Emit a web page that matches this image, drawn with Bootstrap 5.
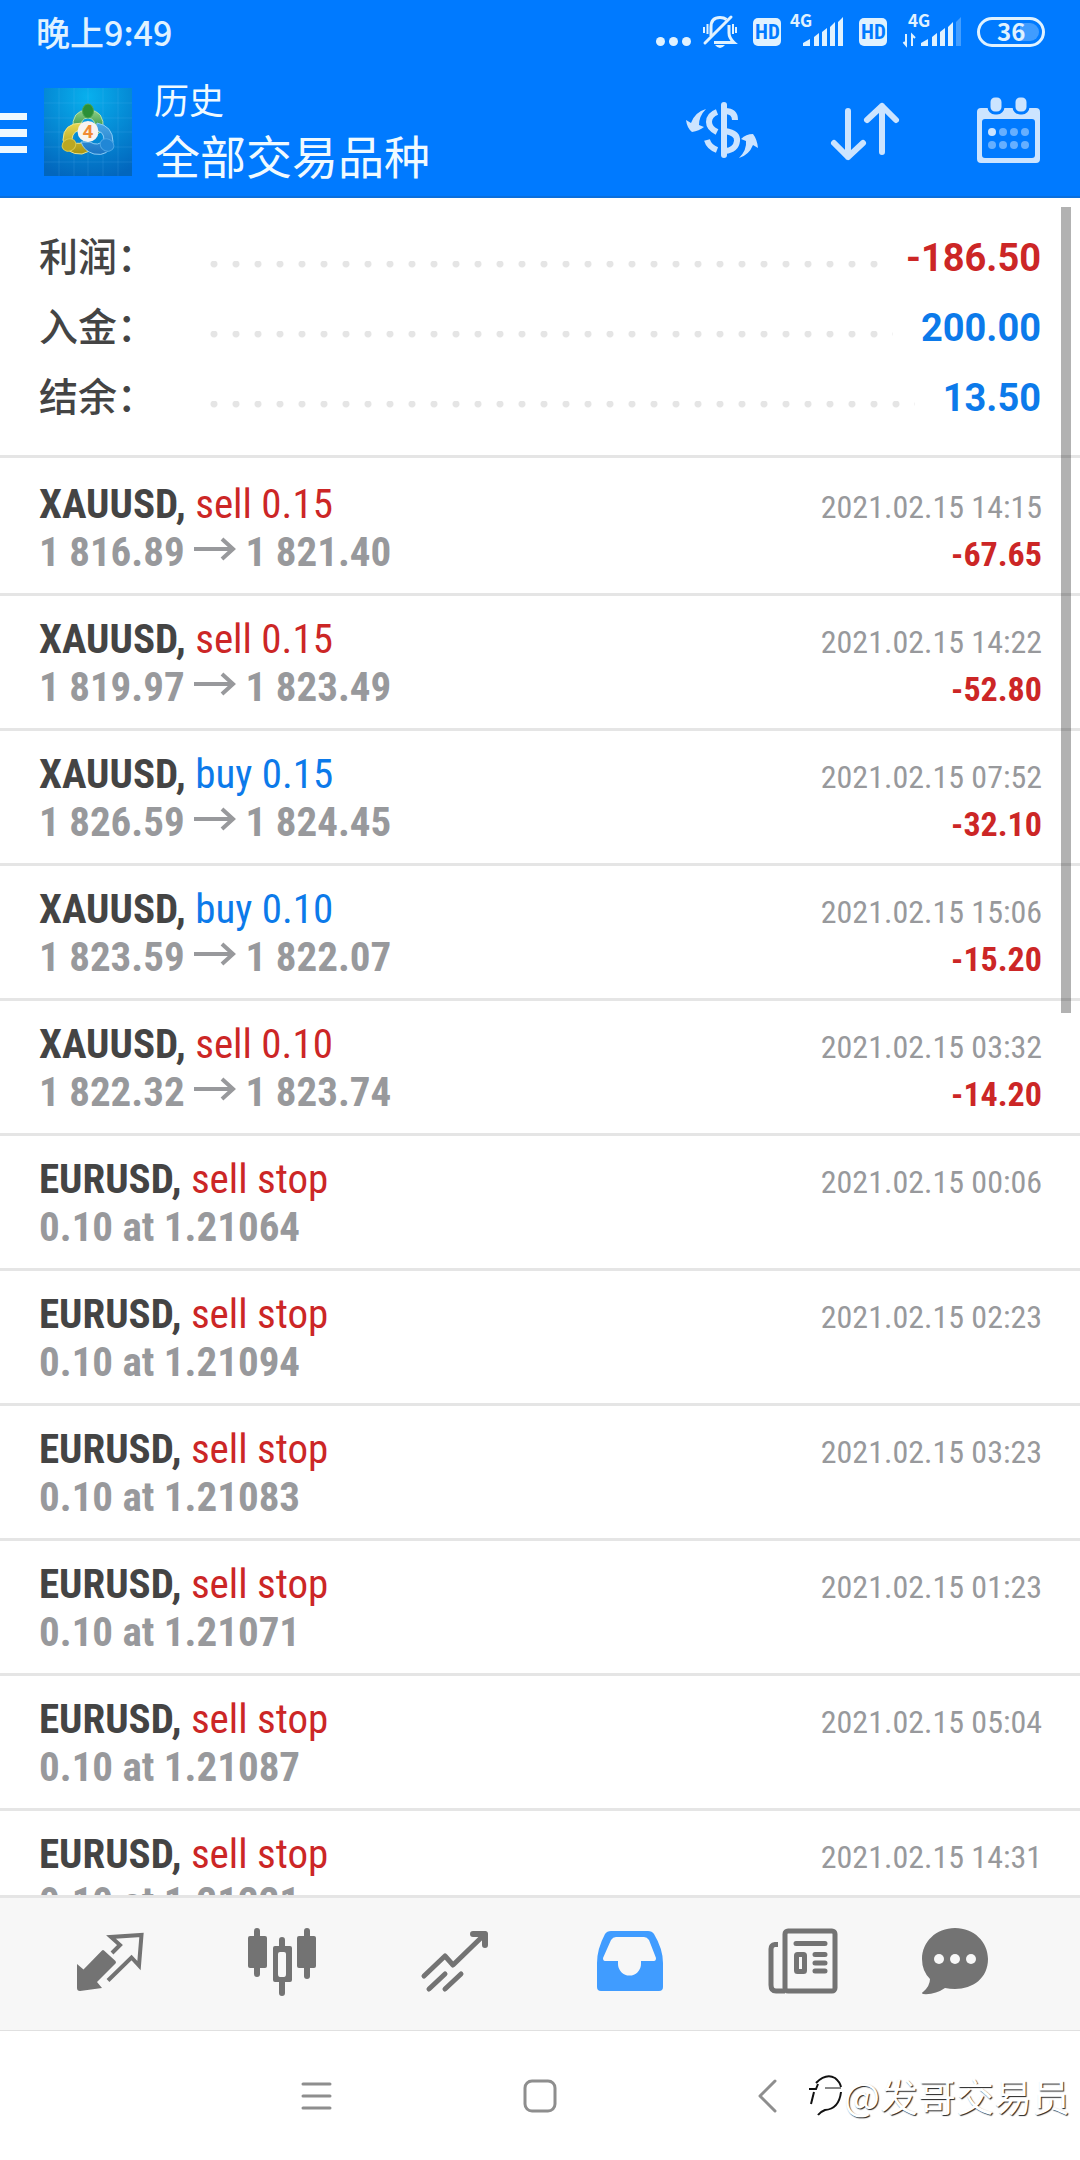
<!DOCTYPE html>
<html lang="zh-CN">
<head>
<meta charset="utf-8">
<meta name="viewport" content="width=device-width, initial-scale=1">
<title>历史 - 全部交易品种</title>
<link rel="stylesheet" href="https://cdn.jsdelivr.net/npm/bootstrap@5.3.0/dist/css/bootstrap.min.css">
<style>
  :root { --brand: #007aff; --line: #e5e5e5; --loss: #cc2626; --gain: #0c7aea; --ink: #444; --muted: #98999c; }
  body { font-family: Roboto, "Noto Sans CJK SC", sans-serif; color: var(--ink); background: #fff; }
  button { border: 0; background: none; padding: 0; line-height: 0; color: inherit; }
  svg { display: block; overflow: visible; }
  .app-head { background: var(--brand); border-bottom: 2px solid #0b6fdc; }
  .status-bar { height: 62px; padding: 4px 35px 0 36px; color: #e0f2ff; }
  .clock { font: 500 34px/56px "Noto Sans CJK SC", sans-serif; }
  .status-icons text { font-family: "Noto Sans CJK SC", sans-serif; font-weight: 700; }
  .status-icons .hd { font-family: "Roboto Condensed", Roboto, sans-serif; }
  .toolbar { height: 134px; padding: 6px 35px 0 0; }
  .app-logo { margin: 0 22px 0 16px; }
  .head-titles { padding-bottom: 5px; }
  .head-small { font: 400 35px/48px "Noto Sans CJK SC", sans-serif; color: #f0faff; }
  .head-large { font: 400 46px/62px "Noto Sans CJK SC", sans-serif; color: #f0faff; }
  .head-actions { gap: 71px; color: #cce4ff; }
  .totals { padding: 25px 39px 22px 39px; border-bottom: 3px solid var(--line); margin-bottom: 3px; }
  .total-line { height: 70px; }
  .total-name { font: 500 39px/62px "Noto Sans CJK SC", sans-serif; width: 171px; padding-bottom: 8px; }
  .total-value { font-size: 38px; font-weight: 700; line-height: 70px; }
  .dots { height: 7px; margin: 13px 28px 0 0; background: radial-gradient(circle at 4px 3px, #e5e5e5 3px, transparent 4px) 0 0 / 22px 7px repeat-x; }
  .loss { color: var(--loss); }
  .gain { color: var(--gain); }
  .deal { height: 135px; padding: 19px 38px 0 39px; border-bottom: 3px solid var(--line); font-family: "Roboto Condensed", Roboto, sans-serif; }
  .deal-line { height: 48px; font-size: 41px; line-height: 48px; white-space: pre; }
  .deal-line b { font-weight: 700; }
  .deal-line svg { vertical-align: baseline; }
  .deal-price { color: var(--muted); font-weight: 700; }
  .deal-time { color: var(--muted); font-size: 32px; line-height: 40px; }
  .deal-profit { font-size: 34px; line-height: 40px; font-weight: 700; }
  .scroll-thumb { position: absolute; top: 9px; right: 9px; width: 10px; height: 47.5%; background: rgba(0, 0, 0, .3); }
  .tab-bar { height: 136px; padding-left: 23px; background: #f7f7f7; border-top: 3px solid var(--line); border-bottom: 1px solid #e0e0e0; color: #737373; }
  .tab-bar button { width: 16.4%; }
  .tab-bar button:last-child { width: 12.2%; }
  .tab-bar .active { color: #409cff; }
  .system-bar { height: 129px; padding: 0 27.3% 0 27.7%; color: #8e8e8e; }
  .sign { position: absolute; right: 10px; bottom: 40px; color: #fff; font: 400 38px/50px "Noto Sans CJK SC", sans-serif; text-shadow: 1px 1px 1px #222; }
</style>
</head>
<body>
<svg width="0" height="0" class="position-absolute" aria-hidden="true">
  <symbol id="to" viewBox="0 0 42 34"><path d="M0 17H40M28 7L39 17L28 27" fill="none" stroke="currentColor" stroke-width="4"/></symbol>
</svg>
<div class="d-flex flex-column vh-100 overflow-hidden">
  <header class="app-head flex-shrink-0">
    <div class="status-bar d-flex justify-content-between align-items-start">
      <span class="clock">晚上9:49</span>
      <svg class="status-icons" width="386" height="48" viewBox="659 5 386 48" fill="currentColor" role="img" aria-label="信号与电量 36">
        <circle cx="660.500" cy="42.500" r="4.500"/><circle cx="673.500" cy="42.500" r="4.500"/><circle cx="686.500" cy="42.500" r="4.500"/>
        <g fill="none" stroke="currentColor" stroke-width="3">
          <path d="M711 37V28Q711 18.500 720 18.500Q724 18.500 726.500 20.500M729 26V34Q729 39 734 43.500H714"/>
          <path d="M705 44L731 18" stroke-linecap="round"/><path d="M704 28V34M707.500 25V35M733 25V35M736 28V34" stroke-width="2"/>
        </g>
        <path d="M715 46H725Q720 52 715 46Z"/>
        <rect x="753" y="19" width="28" height="28" rx="5"/><text class="hd" x="755" y="40" font-size="21" fill="#007aff">HD</text>
        <text x="790" y="28" font-size="17">4G</text>
        <path d="M803 47V44L810 40V47ZM814 47V38L819 34V47ZM822 47V33L827 29V47ZM830 47V28L835 23V47ZM838 47V23L843 18V47Z"/>
        <rect x="859" y="19" width="28" height="28" rx="5"/><text class="hd" x="861" y="40" font-size="21" fill="#007aff">HD</text>
        <text x="908" y="28" font-size="17">4G</text>
        <path d="M906 35V46L903.500 43M912 47V36L915 39" fill="none" stroke="currentColor" stroke-width="2"/>
        <path d="M921 47V44L928 40V47ZM932 47V38L937 34V47ZM940 47V33L945 29V47ZM948 47V28L953 23V47Z"/>
        <path d="M956 47V23L961 18V47Z" opacity=".3"/>
        <path d="M1020 24H1030A9 9 0 0 1 1030 42H1020Z" fill="#409cff"/>
        <rect x="978.500" y="19.500" width="65" height="27" rx="13.500" fill="none" stroke="currentColor" stroke-width="3"/>
        <text x="997" y="41.500" font-size="24">36</text>
      </svg>
    </div>
    <div class="toolbar d-flex align-items-center">
      <button type="button" aria-label="菜单"><svg width="28" height="42" viewBox="0 0 28 42" fill="#ecf8ff"><path d="M0 2H27V9H0ZM0 18H27V26H0ZM0 35H27V42H0Z"/></svg></button>
      <svg class="app-logo flex-shrink-0" width="88" height="88" viewBox="0 0 88 88" aria-hidden="true">
        <defs>
          <radialGradient id="sky" cx=".5" cy=".1" r=".95"><stop offset="0" stop-color="#08b0ee"/><stop offset="1" stop-color="#0266bd"/></radialGradient>
          <linearGradient id="grn" x2="0" y2="1"><stop offset="0" stop-color="#8fd08a"/><stop offset="1" stop-color="#15802c"/></linearGradient>
          <linearGradient id="yel" x2="0" y2="1"><stop offset="0" stop-color="#e8d850"/><stop offset="1" stop-color="#a89412"/></linearGradient>
          <linearGradient id="blu" x2="0" y2="1"><stop offset="0" stop-color="#4aa8e6"/><stop offset="1" stop-color="#1a74c4"/></linearGradient>
        </defs>
        <rect width="88" height="88" fill="url(#sky)"/>
        <path d="M15 0V88M30 0V88M44 0V88M59 0V88M74 0V88M0 15H88M0 30H88M0 44H88M0 59H88M0 74H88" stroke="#7fd0ff" stroke-opacity=".14"/>
        <g stroke-width="1">
          <path d="M29 42Q27 22 44 22Q61 22 59 42L52 47Q53 30 44 30Q36 30 37 42Z" fill="url(#grn)" stroke="#b4e0ac"/>
          <path d="M38 35Q19 35 19 52Q22 67 38 66L48 62L40 54Q31 58 28 51Q29 42 38 42Z" fill="url(#yel)" stroke="#ece48c"/>
          <path d="M53 35Q69 38 69 54Q65 69 50 66Q40 63 37 54L46 54Q54 59 60 52Q60 43 52 43Z" fill="url(#blu)" stroke="#8accf6"/>
          <ellipse cx="44" cy="23" rx="5.500" ry="7" fill="#2a8f38" stroke="#4fa650"/>
          <ellipse cx="25" cy="57" rx="7" ry="6" fill="#bba721" stroke="#d8c94a" transform="rotate(-25 25 57)"/>
          <ellipse cx="63" cy="57" rx="7" ry="6" fill="#2187d6" stroke="#4aa4e4" transform="rotate(25 63 57)"/>
        </g>
        <circle cx="44" cy="43.500" r="10.500" fill="#f7f3f0"/>
        <text x="44" y="50" font-family="Roboto" font-weight="700" font-size="19" text-anchor="middle" fill="#f08a35">4</text>
      </svg>
      <div class="head-titles flex-grow-1">
        <div class="head-small">历史</div>
        <h1 class="head-large m-0">全部交易品种</h1>
      </div>
      <div class="head-actions d-flex">
        <button type="button" aria-label="品种"><svg width="72" height="72" viewBox="0 2 72 72" fill="currentColor">
          <g fill="none" stroke="currentColor" stroke-width="6"><path d="M37 11V61" stroke-linecap="round"/><path d="M30 18Q22 21 22 28Q22 34 30 38M20 46Q22 53 30 56M38 17Q48 17 48 26M38 37Q51 39 50 47Q49 56 38 57"/></g>
          <path d="M19 15Q8 18 4 29L-1 26Q0 34 5 38Q12 37 17 33L12 31Q12 22 19 15ZM52 64Q60 56 59 47L54 45Q59 40 66 40Q70 45 71 54L66 51Q62 61 52 64Z"/></svg></button>
        <button type="button" aria-label="排序"><svg width="72" height="72" viewBox="0 2 72 72" fill="none" stroke="currentColor" stroke-width="6" stroke-linecap="round" stroke-linejoin="round"><path d="M18 17V63M4 49L18 63L33 49M52 58V12M37 26L52 12L66 26"/></svg></button>
        <button type="button" aria-label="日期"><svg width="72" height="72" viewBox="0 2 72 72" fill="currentColor">
          <path fill-rule="evenodd" d="M8 14H63Q67 14 67 18V65Q67 69 63 69H8Q4 69 4 65V18Q4 14 8 14ZM12 25Q9 25 9 28V61Q9 64 12 64H59Q62 64 62 61V28Q62 25 59 25Z"/>
          <g stroke="#007aff" stroke-width="3"><rect x="16" y="2" width="14" height="17" rx="6"/><rect x="41" y="2" width="14" height="17" rx="6"/></g>
          <circle cx="19" cy="38" r="4"/><g fill="#66afff"><circle cx="30" cy="38" r="4"/><circle cx="41" cy="38" r="4"/><circle cx="52" cy="38" r="4"/><circle cx="19" cy="51" r="4"/><circle cx="30" cy="51" r="4"/><circle cx="41" cy="51" r="4"/><circle cx="52" cy="51" r="4"/></g></svg></button>
      </div>
    </div>
  </header>

  <main class="flex-grow-1 overflow-hidden position-relative">
    <section class="totals">
      <div class="total-line d-flex align-items-center"><span class="total-name">利润：</span><span class="dots flex-grow-1"></span><span class="total-value loss">-186.50</span></div>
      <div class="total-line d-flex align-items-center"><span class="total-name">入金：</span><span class="dots flex-grow-1"></span><span class="total-value gain">200.00</span></div>
      <div class="total-line d-flex align-items-center"><span class="total-name">结余：</span><span class="dots flex-grow-1"></span><span class="total-value gain">13.50</span></div>
    </section>
    <ul class="list-unstyled m-0">
      <li class="deal"><div class="deal-line d-flex justify-content-between align-items-baseline"><span><b>XAUUSD,</b> <span class="loss">sell 0.15</span></span><span class="deal-time">2021.02.15 14:15</span></div><div class="deal-line d-flex justify-content-between align-items-baseline"><span class="deal-price">1 816.89 <svg class="d-inline-block" width="42" height="34" role="img" aria-label="至"><use href="#to"/></svg> 1 821.40</span><span class="deal-profit loss">-67.65</span></div></li>
      <li class="deal"><div class="deal-line d-flex justify-content-between align-items-baseline"><span><b>XAUUSD,</b> <span class="loss">sell 0.15</span></span><span class="deal-time">2021.02.15 14:22</span></div><div class="deal-line d-flex justify-content-between align-items-baseline"><span class="deal-price">1 819.97 <svg class="d-inline-block" width="42" height="34" role="img" aria-label="至"><use href="#to"/></svg> 1 823.49</span><span class="deal-profit loss">-52.80</span></div></li>
      <li class="deal"><div class="deal-line d-flex justify-content-between align-items-baseline"><span><b>XAUUSD,</b> <span class="gain">buy 0.15</span></span><span class="deal-time">2021.02.15 07:52</span></div><div class="deal-line d-flex justify-content-between align-items-baseline"><span class="deal-price">1 826.59 <svg class="d-inline-block" width="42" height="34" role="img" aria-label="至"><use href="#to"/></svg> 1 824.45</span><span class="deal-profit loss">-32.10</span></div></li>
      <li class="deal"><div class="deal-line d-flex justify-content-between align-items-baseline"><span><b>XAUUSD,</b> <span class="gain">buy 0.10</span></span><span class="deal-time">2021.02.15 15:06</span></div><div class="deal-line d-flex justify-content-between align-items-baseline"><span class="deal-price">1 823.59 <svg class="d-inline-block" width="42" height="34" role="img" aria-label="至"><use href="#to"/></svg> 1 822.07</span><span class="deal-profit loss">-15.20</span></div></li>
      <li class="deal"><div class="deal-line d-flex justify-content-between align-items-baseline"><span><b>XAUUSD,</b> <span class="loss">sell 0.10</span></span><span class="deal-time">2021.02.15 03:32</span></div><div class="deal-line d-flex justify-content-between align-items-baseline"><span class="deal-price">1 822.32 <svg class="d-inline-block" width="42" height="34" role="img" aria-label="至"><use href="#to"/></svg> 1 823.74</span><span class="deal-profit loss">-14.20</span></div></li>
      <li class="deal"><div class="deal-line d-flex justify-content-between align-items-baseline"><span><b>EURUSD,</b> <span class="loss">sell stop</span></span><span class="deal-time">2021.02.15 00:06</span></div><div class="deal-line deal-price">0.10 at 1.21064</div></li>
      <li class="deal"><div class="deal-line d-flex justify-content-between align-items-baseline"><span><b>EURUSD,</b> <span class="loss">sell stop</span></span><span class="deal-time">2021.02.15 02:23</span></div><div class="deal-line deal-price">0.10 at 1.21094</div></li>
      <li class="deal"><div class="deal-line d-flex justify-content-between align-items-baseline"><span><b>EURUSD,</b> <span class="loss">sell stop</span></span><span class="deal-time">2021.02.15 03:23</span></div><div class="deal-line deal-price">0.10 at 1.21083</div></li>
      <li class="deal"><div class="deal-line d-flex justify-content-between align-items-baseline"><span><b>EURUSD,</b> <span class="loss">sell stop</span></span><span class="deal-time">2021.02.15 01:23</span></div><div class="deal-line deal-price">0.10 at 1.21071</div></li>
      <li class="deal"><div class="deal-line d-flex justify-content-between align-items-baseline"><span><b>EURUSD,</b> <span class="loss">sell stop</span></span><span class="deal-time">2021.02.15 05:04</span></div><div class="deal-line deal-price">0.10 at 1.21087</div></li>
      <li class="deal"><div class="deal-line d-flex justify-content-between align-items-baseline"><span><b>EURUSD,</b> <span class="loss">sell stop</span></span><span class="deal-time">2021.02.15 14:31</span></div><div class="deal-line deal-price">0.10 at 1.21221</div></li>
    </ul>
    <div class="scroll-thumb"></div>
  </main>

  <nav class="tab-bar d-flex flex-shrink-0 align-items-center" aria-label="主导航">
    <button type="button" class="d-flex justify-content-center" aria-label="行情"><svg width="72" height="72" viewBox="0 0 72 72"><path d="M3 36L9.500 41.500L28 22.500Q29 21.500 30 22.500L41.500 33Q42.500 34.500 41.500 35.500L23 54L28 60L6 63Q3 63 3 60Z" fill="currentColor"/><path d="M38 25L46 17L37 9L67.500 7L65 37.500L57.500 29.500L34 52.500" fill="none" stroke="currentColor" stroke-width="4"/></svg></button>
    <button type="button" class="d-flex justify-content-center" aria-label="图表"><svg width="72" height="72" viewBox="0 0 72 72" fill="currentColor"><rect x="1" y="8" width="19" height="32" rx="2"/><rect x="7" y="0" width="6" height="49" rx="3"/><path fill-rule="evenodd" d="M28 18H43Q45 18 45 20V52Q45 54 43 54H28Q26 54 26 52V20Q26 18 28 18ZM33 24Q31 24 31 26V46Q31 49 33 49H37Q39 49 39 46V26Q39 24 37 24Z"/><path d="M32 19V12Q32 9 35 9Q38 9 38 12V19ZM32 53V65Q32 68 35 68Q38 68 38 65V53Z"/><rect x="50" y="8" width="19" height="32" rx="2"/><rect x="57" y="0" width="6" height="51" rx="3"/></svg></button>
    <button type="button" class="d-flex justify-content-center" aria-label="交易"><svg width="72" height="72" viewBox="0 0 72 72" fill="none" stroke="currentColor" stroke-width="5" stroke-linecap="round" stroke-linejoin="round"><path d="M4 48L25 28L33 37L65 6"/><path d="M53 6H65V17" stroke-width="6"/><path d="M9 61L25 46M25 61L41 46" stroke-linejoin="miter"/></svg></button>
    <button type="button" class="d-flex justify-content-center active" aria-label="历史" aria-current="page"><svg width="72" height="72" viewBox="0 0 72 72" fill="currentColor"><path fill-rule="evenodd" d="M17 3H54Q58 3 60 6Q69 21 69 35V59Q69 63 65 63H7Q3 63 3 59V35Q3 21 11 6Q13 3 17 3ZM22 9Q19 9 17 12L9 30Q9 33 11 33H24V36A11.500 11.500 0 0 0 47 36V33H60Q62 33 62 30L55 12Q53 9 50 9Z"/></svg></button>
    <button type="button" class="d-flex justify-content-center" aria-label="新闻"><svg width="72" height="72" viewBox="0 0 72 72" fill="none" stroke="currentColor" stroke-width="5"><rect x="18" y="3" width="50" height="60" rx="3"/><path d="M11 16.500H8Q4 17 4 21V57Q4 63 9 63H18"/><path d="M29 15.500H58M48 26.500H58M48 35H58M48 43H58" stroke-linecap="round"/><rect x="29.500" y="26.500" width="8" height="17" rx="1"/></svg></button>
    <button type="button" class="d-flex justify-content-center" aria-label="消息"><svg width="72" height="72" viewBox="0 0 72 72" fill="currentColor"><path d="M37 0C56 0 70 14 70 31C70 50 55 61 37 61Q32 61 27 60Q17 67 5 66Q3 65 5 64Q12 58 12 51Q4 43 4 31C4 14 18 0 37 0Z"/><g fill="#f7f7f7"><circle cx="21" cy="31" r="5"/><circle cx="37" cy="31" r="5"/><circle cx="53" cy="31" r="5"/></g></svg></button>
  </nav>

  <footer class="system-bar position-relative d-flex flex-shrink-0 align-items-center justify-content-between">
    <button type="button" aria-label="最近任务"><svg width="36" height="36" viewBox="0 0 36 36" fill="none" stroke="currentColor" stroke-width="3" stroke-linecap="round"><path d="M4 6H31M4 18H31M4 30H31"/></svg></button>
    <button type="button" aria-label="主屏幕"><svg width="36" height="36" viewBox="0 0 36 36" fill="none" stroke="currentColor" stroke-width="3"><rect x="1" y="3" width="30" height="30" rx="7"/></svg></button>
    <button type="button" aria-label="返回"><svg width="36" height="36" viewBox="0 0 36 36" fill="none" stroke="currentColor" stroke-width="3" stroke-linecap="round" stroke-linejoin="round"><path d="M26 3L11 18L26 33"/></svg></button>
    <div class="sign d-flex align-items-center"><svg width="36" height="44" viewBox="0 0 36 44" fill="none" stroke="#111" stroke-width="2" aria-hidden="true"><path d="M8 10Q18 0 27 5Q32 9 33 14M33 19Q31 36 17 37Q12 39 10 42"/><path d="M1 16H8L10 11M6 19L3 31"/><path d="M17 15H33" stroke-width="1"/></svg><span>@发哥交易员</span></div>
  </footer>
</div>
<script src="https://cdn.jsdelivr.net/npm/bootstrap@5.3.0/dist/js/bootstrap.bundle.min.js"></script>
</body>
</html>
